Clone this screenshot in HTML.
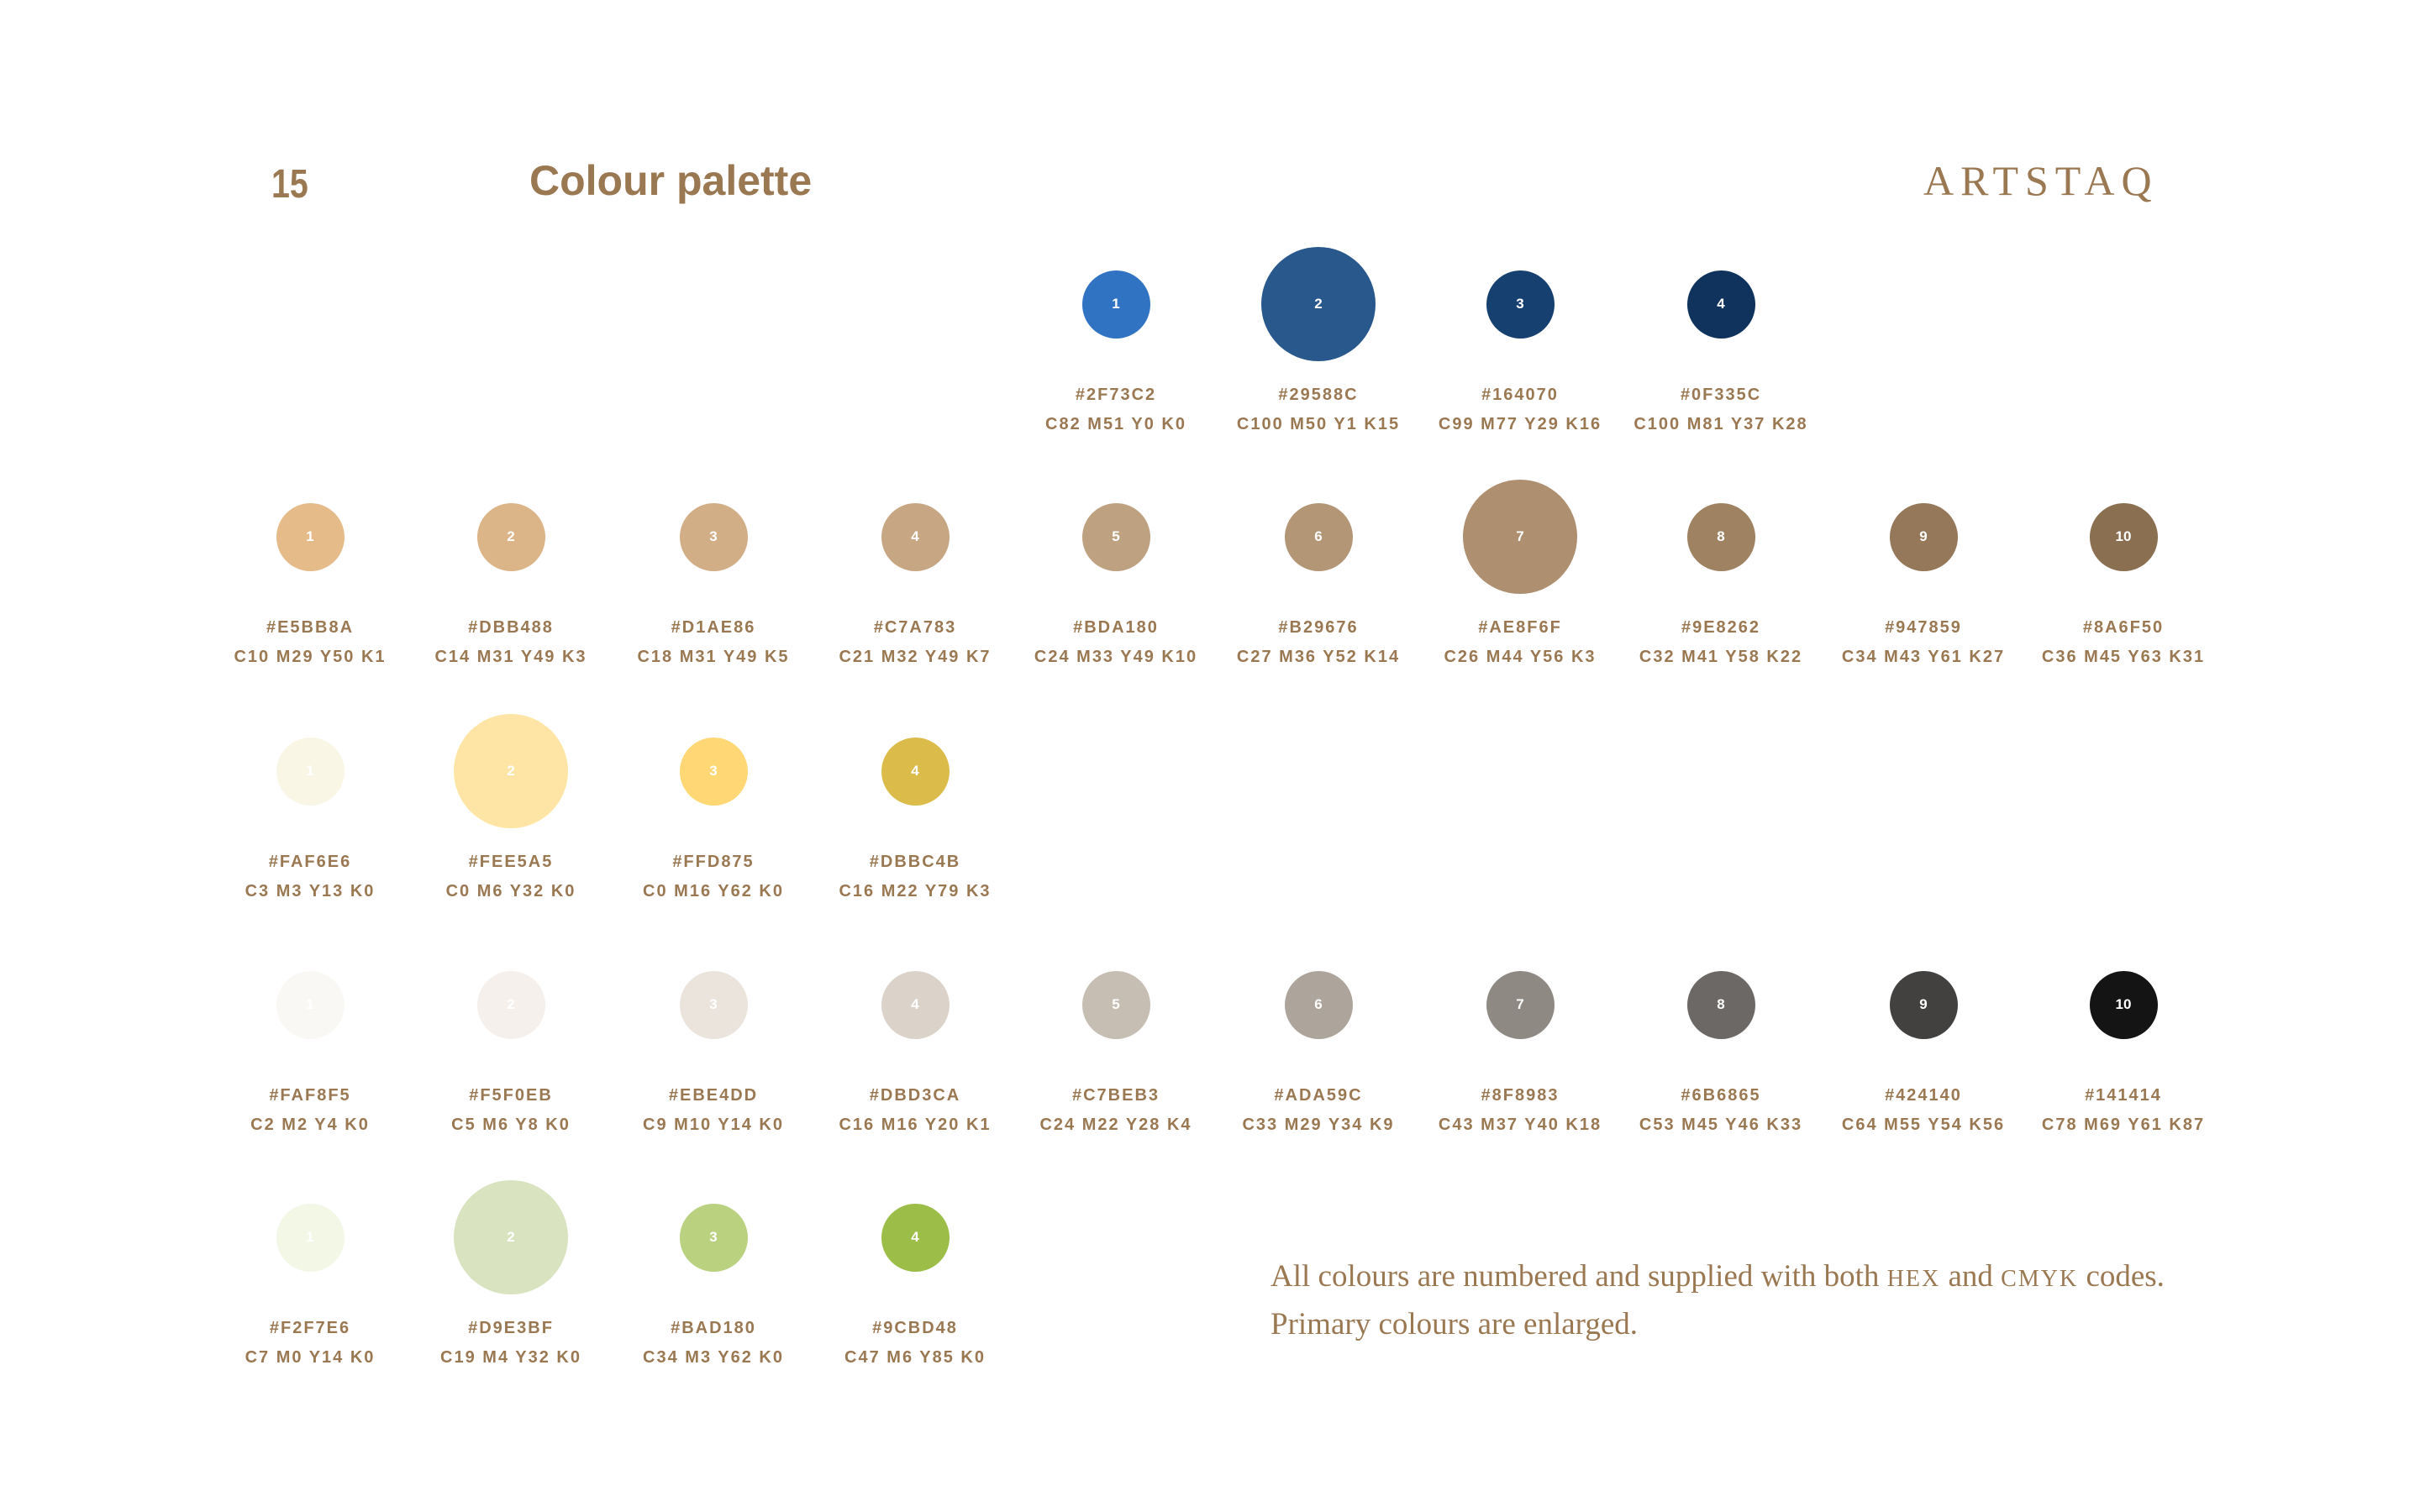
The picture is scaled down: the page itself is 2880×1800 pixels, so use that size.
<!DOCTYPE html>
<html><head><meta charset="utf-8">
<style>
html,body{margin:0;padding:0;background:#fff;}
body{width:2880px;height:1800px;position:relative;overflow:hidden;font-family:"Liberation Sans",sans-serif;color:#9a7852;}
.t{position:absolute;font-weight:bold;font-size:50px;line-height:1;}
.logo{position:absolute;left:2289px;top:190px;font-family:"Liberation Serif",serif;font-size:50px;letter-spacing:8px;line-height:1;}
.it{position:absolute;width:260px;height:200px;}
.c{position:absolute;left:50%;border-radius:50%;color:#fff;font-size:17px;font-weight:bold;display:flex;align-items:center;justify-content:center;}
.h,.k{position:absolute;left:0;width:260px;text-align:center;font-size:20px;font-weight:bold;letter-spacing:2px;line-height:1;}
.p{position:absolute;left:1512px;top:1493px;font-family:"Liberation Serif",serif;font-size:37px;line-height:54px;color:#9a7852;}
.sc{font-size:28px;letter-spacing:2px;}
</style></head><body>
<div class="t" style="left:323px;top:196px;font-size:48px;transform:scaleX(0.82);transform-origin:left top;">15</div>
<div class="t" style="left:630px;top:190px;">Colour palette</div>
<div class="logo">ARTSTAQ</div>

<div id="g"></div>
<script>
const cols=[369,608,849,1089,1328,1569,1809,2048,2289,2527];
const rows=[
 {y:362,start:4,big:2,d:[["#2F73C2","C82 M51 Y0 K0"],["#29588C","C100 M50 Y1 K15"],["#164070","C99 M77 Y29 K16"],["#0F335C","C100 M81 Y37 K28"]]},
 {y:639,start:0,big:7,d:[["#E5BB8A","C10 M29 Y50 K1"],["#DBB488","C14 M31 Y49 K3"],["#D1AE86","C18 M31 Y49 K5"],["#C7A783","C21 M32 Y49 K7"],["#BDA180","C24 M33 Y49 K10"],["#B29676","C27 M36 Y52 K14"],["#AE8F6F","C26 M44 Y56 K3"],["#9E8262","C32 M41 Y58 K22"],["#947859","C34 M43 Y61 K27"],["#8A6F50","C36 M45 Y63 K31"]]},
 {y:918,start:0,big:2,d:[["#FAF6E6","C3 M3 Y13 K0"],["#FEE5A5","C0 M6 Y32 K0"],["#FFD875","C0 M16 Y62 K0"],["#DBBC4B","C16 M22 Y79 K3"]]},
 {y:1196,start:0,big:0,d:[["#FAF8F5","C2 M2 Y4 K0"],["#F5F0EB","C5 M6 Y8 K0"],["#EBE4DD","C9 M10 Y14 K0"],["#DBD3CA","C16 M16 Y20 K1"],["#C7BEB3","C24 M22 Y28 K4"],["#ADA59C","C33 M29 Y34 K9"],["#8F8983","C43 M37 Y40 K18"],["#6B6865","C53 M45 Y46 K33"],["#424140","C64 M55 Y54 K56"],["#141414","C78 M69 Y61 K87"]]},
 {y:1473,start:0,big:2,d:[["#F2F7E6","C7 M0 Y14 K0"],["#D9E3BF","C19 M4 Y32 K0"],["#BAD180","C34 M3 Y62 K0"],["#9CBD48","C47 M6 Y85 K0"]]}
];
let h="";
rows.forEach(r=>{r.d.forEach((e,i)=>{
 const cx=cols[r.start+i], n=i+1, s=(n===r.big)?136:81;
 h+=`<div class="it" style="left:${cx-130}px;top:${r.y}px">`+
 `<div class="c" style="width:${s}px;height:${s}px;margin-left:${-s/2}px;top:${-s/2}px;background:${e[0]}">${n}</div>`+
 `<div class="h" style="top:98px">${e[0]}</div><div class="k" style="top:133px">${e[1]}</div></div>`;
});});
document.getElementById("g").innerHTML=h;
</script>
<div class="p">All colours are numbered and supplied with both <span class="sc">HEX</span> and <span class="sc">CMYK</span> codes.<br>Primary colours are enlarged.</div>
</body></html>
